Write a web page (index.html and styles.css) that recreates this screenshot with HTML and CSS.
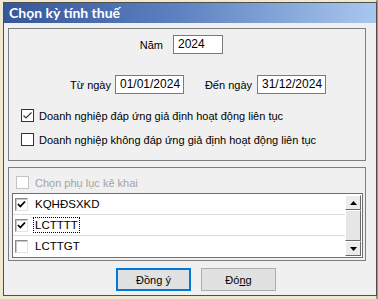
FILE: index.html
```html
<!DOCTYPE html>
<html lang="vi">

<head>
    <meta charset="UTF-8">
    <meta name="viewport" content="width=device-width, initial-scale=1.0">
    <title>Chọn kỳ tính thuế</title>
    <link rel="stylesheet" href="styles.css">
</head>

<body>
    <div class="window">
        <div class="titlebar">Chọn kỳ tính thuế</div>

        <div class="content">
            <div class="group period">
                <div class="row year-row">
                    <span class="label year-label">Năm</span>
                    <div class="field year">2024</div>
                </div>

                <div class="row date-row">
                    <span class="label from-label">Từ ngày</span>
                    <div class="field date">01/01/2024</div>
                    <span class="label to-label">Đến ngày</span>
                    <div class="field date">31/12/2024</div>
                </div>

                <label class="check first">
                    <span class="box">
                        <svg width="11" height="11" viewBox="0 0 11 11"><path d="M1.5 5.5 L4 8 L9.5 2.5" fill="none" stroke="#333" stroke-width="1.1"/></svg>
                    </span>
                    Doanh nghiệp đáp ứng giả định hoạt động liên tục
                </label>
                <label class="check second">
                    <span class="box"></span>
                    Doanh nghiệp không đáp ứng giả định hoạt động liên tục
                </label>
            </div>

            <div class="group appendix">
                <label class="check disabled">
                    <span class="box"></span>
                    Chọn phụ lục kê khai
                </label>

                <div class="listbox">
                    <ul class="items">
                        <li>
                            <span class="box3d">
                                <svg width="9" height="9" viewBox="0 0 9 9"><path d="M1 4 L3.3 6.5 L8 1.5" fill="none" stroke="#000" stroke-width="1.8"/></svg>
                            </span>
                            <span class="item-text">KQHĐSXKD</span>
                        </li>
                        <li>
                            <span class="box3d">
                                <svg width="9" height="9" viewBox="0 0 9 9"><path d="M1 4 L3.3 6.5 L8 1.5" fill="none" stroke="#000" stroke-width="1.8"/></svg>
                            </span>
                            <span class="item-text focused">LCTTTT</span>
                        </li>
                        <li>
                            <span class="box3d"></span>
                            <span class="item-text">LCTTGT</span>
                        </li>
                    </ul>
                    <div class="scrollbar">
                        <div class="arrow">
                            <svg width="7" height="4" viewBox="0 0 7 4"><path d="M0 4 L3.5 0 L7 4 Z" fill="#000"/></svg>
                        </div>
                        <div class="thumb"></div>
                        <div class="arrow">
                            <svg width="7" height="4" viewBox="0 0 7 4"><path d="M0 0 L3.5 4 L7 0 Z" fill="#000"/></svg>
                        </div>
                    </div>
                </div>
            </div>

            <div class="actions">
                <button class="btn default">Đồn<u>g</u> ý</button>
                <button class="btn">Đó<u>n</u>g</button>
            </div>
        </div>
    </div>
</body>

</html>
```

FILE: styles.css
```css
body {
    margin: 0;
    width: 378px;
    height: 299px;
    overflow: hidden;
    background: linear-gradient(90deg, #efe9cf 376px, #8c9c8a 376px);
    font-family: 'Liberation Sans', Arial, sans-serif;
    font-size: 11px;
    color: #000;
}

.window {
    box-sizing: border-box;
    width: 374px;
    height: 294px;
    margin: 2px 0 0 3px;
    border: 1px solid #4f4f4f;
    background: #f0f0f0;
}

.titlebar {
    height: 20px;
    line-height: 20px;
    padding-left: 5px;
    background: linear-gradient(90deg, #36569a 0%, #5b7fbf 45%, #a9c7ee 100%);
    color: #fff;
    font-family: Lato, 'Liberation Sans', sans-serif;
    font-weight: bold;
    font-size: 14px;
}

.content {
    padding: 5px 0 0 4px;
}

.group {
    box-sizing: border-box;
    width: 358px;
    border: 1px solid #7e7e7e;
}

.period {
    height: 133px;
    padding-top: 6px;
}

.appendix {
    height: 94px;
    margin-top: 6px;
    padding-top: 8px;
}

.row {
    display: flex;
    align-items: center;
    height: 19px;
}

.label {
    text-align: right;
    white-space: nowrap;
}

.year-row {
    padding-left: 125px;
}

.year-label {
    width: 29px;
    margin-right: 10px;
}

.date-row {
    margin-top: 21px;
    padding-left: 61px;
}

.from-label {
    width: 38px;
    margin-right: 7px;
}

.to-label {
    width: 49px;
    margin-left: 19px;
    margin-right: 5px;
}

.field {
    box-sizing: border-box;
    height: 19px;
    line-height: 17px;
    padding-left: 4px;
    border: 1px solid #7a7a7a;
    background: #fff;
    font-size: 12px;
}

.year {
    width: 50px;
}

.date {
    width: 69px;
}

.check {
    display: flex;
    align-items: center;
    height: 13px;
    padding-left: 12px;
    white-space: nowrap;
}

.check.first {
    margin-top: 15px;
}

.check.second {
    margin-top: 11px;
}

.box {
    box-sizing: border-box;
    display: flex;
    align-items: center;
    justify-content: center;
    width: 13px;
    height: 13px;
    margin-right: 5px;
    border: 1px solid #333;
    background: #fff;
}

.check.disabled {
    padding-left: 7px;
    color: #a3a3a3;
}

.check.disabled .box {
    margin-right: 6px;
    border-color: #c4c4c4;
}

.listbox {
    box-sizing: border-box;
    display: flex;
    width: 351px;
    height: 65px;
    margin: 4px 0 0 3px;
    border: 1px solid #6f6f6f;
    background: #fff;
}

.items {
    flex: 1;
    margin: 0;
    padding: 0;
    list-style: none;
    font-size: 12px;
}

.items li {
    display: flex;
    align-items: center;
    height: 20px;
    padding-left: 2px;
    border-bottom: 1px solid #dcdcdc;
}

.items li:last-child {
    border-bottom: none;
}

.box3d {
    box-sizing: border-box;
    display: flex;
    align-items: center;
    justify-content: center;
    width: 13px;
    height: 13px;
    margin-right: 5px;
    border: 1px solid;
    border-color: #8c8c8c #e3e3e3 #e3e3e3 #8c8c8c;
    box-shadow: inset 1px 1px 0 #c8c8c8;
    background: #fff;
}

.item-text {
    padding: 0 1px;
    border: 1px dotted transparent;
    line-height: 14px;
    font-size: 11.5px;
}

.item-text.focused {
    border-color: #000;
}

.scrollbar {
    display: flex;
    flex-direction: column;
    width: 16px;
    margin: 1px 1px 1px 0;
}

.arrow,
.thumb {
    box-sizing: border-box;
    border: 1px solid;
    border-color: #fff #6a6a6a #6a6a6a #fff;
    background: #ececec;
}

.arrow {
    display: flex;
    align-items: center;
    justify-content: center;
    height: 15px;
}

.thumb {
    flex: 1;
    background: #e6e6e6;
}

.actions {
    display: flex;
    gap: 10px;
    margin-top: 7px;
    padding-left: 108px;
}

.btn {
    box-sizing: border-box;
    width: 75px;
    height: 23px;
    padding: 0;
    border: 1px solid #adadad;
    background: #e1e1e1;
    font-family: inherit;
    font-size: 11px;
    color: #000;
}

.btn.default {
    border-color: #0078d7;
    box-shadow: inset 0 0 0 1px #0078d7;
}
```
